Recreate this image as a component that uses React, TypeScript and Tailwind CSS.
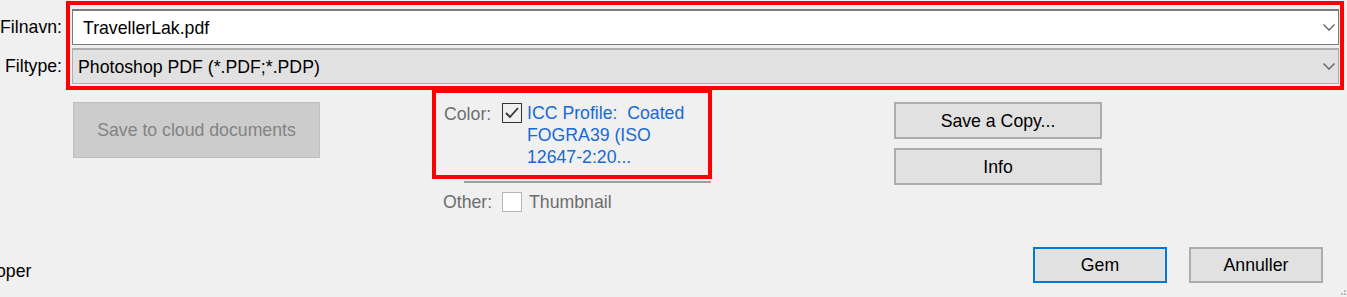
import React from 'react';

const font = { fontFamily: '"Segoe UI", "Liberation Sans", Arial, sans-serif' };

function Chevron() {
    return (
        <svg width="12" height="7" viewBox="0 0 12 7" className="shrink-0">
            <polyline points="0.5,0.5 6,6 11.5,0.5" fill="none" stroke="#606060" strokeWidth="1.3" />
        </svg>
    );
}

function CheckBox({ checked }: { checked?: boolean }) {
    return (
        <div
            className={`w-[20px] h-[20px] shrink-0 border flex items-center justify-center ${
                checked ? 'border-[#333333] bg-[#f0f0f0]' : 'border-[#b5b5b5] bg-white'
            }`}
        >
            {checked && (
                <svg width="16" height="14" viewBox="0 0 16 14">
                    <polyline points="2,7 6,11 14,2" fill="none" stroke="#333333" strokeWidth="1.8" />
                </svg>
            )}
        </div>
    );
}

function DialogButton({ label, w, primary }: { label: string; w: string; primary?: boolean }) {
    return (
        <div
            className={`${w} h-[36px] border-2 bg-[#e1e1e1] flex items-center justify-center text-black ${
                primary ? 'border-[#0078d7]' : 'border-[#adadad]'
            }`}
        >
            {label}
        </div>
    );
}

export default function App() {
    return (
        <div
            className="relative w-[1347px] h-[297px] bg-[#f0f0f0] overflow-hidden text-[17.7px] leading-[22px] text-black"
            style={font}
        >
            {/* file name + type */}
            <div className="flex h-[90px]">
                <div className="w-[66px] pt-[9px] pr-[4px] flex flex-col gap-[3px]">
                    <div className="h-[36px] flex items-center justify-end whitespace-nowrap">Filnavn:</div>
                    <div className="h-[36px] flex items-center justify-end whitespace-nowrap">Filtype:</div>
                </div>
                <div className="mt-[1px] w-[1278px] h-[89px] border-4 border-[#ff0000] pt-[4px] pl-[2px] pr-[1px] flex flex-col gap-[3px]">
                    <div className="h-[36px] bg-white border border-[#7a7a7a] border-t-2 flex items-center pl-[10px] pr-[3px]">
                        <span className="flex-1">TravellerLak.pdf</span>
                        <Chevron />
                    </div>
                    <div className="h-[36px] bg-[#e1e1e1] border border-[#adadad] border-t-2 flex items-center pl-[5px] pr-[3px]">
                        <span className="flex-1">Photoshop PDF (*.PDF;*.PDP)</span>
                        <Chevron />
                    </div>
                </div>
            </div>

            {/* options */}
            <div className="flex items-start h-[157px] pl-[73px]">
                <div className="mt-[12px] w-[247px] h-[56px] bg-[#cccccc] border border-[#bfbfbf] text-[#838383] flex items-center justify-center whitespace-nowrap">
                    Save to cloud documents
                </div>

                <div className="ml-[112px] -mt-[1px] w-[280px] flex flex-col">
                    <div className="h-[90px] border-4 border-[#ff0000] pl-[8px] pt-[10px] flex items-start">
                        <span className="w-[58px] text-[#6d6d6d]">Color:</span>
                        <CheckBox checked />
                        <div className="ml-[5px] -mt-[1px] text-[#1769d6] whitespace-pre">
                            <div>ICC Profile:  Coated</div>
                            <div>FOGRA39 (ISO</div>
                            <div>12647-2:20...</div>
                        </div>
                    </div>
                    <div className="ml-[32px] mt-[2px] w-[247px] h-[2px] bg-[#a0a0a0]" />
                    <div className="mt-[8px] pl-[11px] flex items-center">
                        <span className="w-[59px] text-[#6d6d6d]">Other:</span>
                        <CheckBox />
                        <span className="ml-[7px] text-[#6d6d6d]">Thumbnail</span>
                    </div>
                </div>

                <div className="ml-[182px] mt-[12px] flex flex-col gap-[9px]">
                    <div className="w-[208px] h-[37px] border-2 border-[#adadad] bg-[#e1e1e1] flex items-center justify-center">
                        Save a Copy...
                    </div>
                    <div className="w-[208px] h-[37px] border-2 border-[#adadad] bg-[#e1e1e1] flex items-center justify-center">
                        Info
                    </div>
                </div>
            </div>

            {/* footer */}
            <div className="flex items-start h-[50px] pr-[24px]">
                <span className="-ml-[4px] mt-[13px]">oper</span>
                <div className="flex-1" />
                <div className="flex gap-[22px]">
                    <DialogButton label="Gem" w="w-[134px]" primary />
                    <DialogButton label="Annuller" w="w-[134px]" />
                </div>
            </div>

            {/* resize grip */}
            <svg className="absolute right-0 bottom-0" width="8" height="8" viewBox="0 0 8 8">
                <rect x="5" y="1" width="2" height="2" fill="#bcbcbc" />
                <rect x="2" y="4" width="2" height="2" fill="#bcbcbc" />
                <rect x="5" y="4" width="2" height="2" fill="#bcbcbc" />
            </svg>
        </div>
    );
}
